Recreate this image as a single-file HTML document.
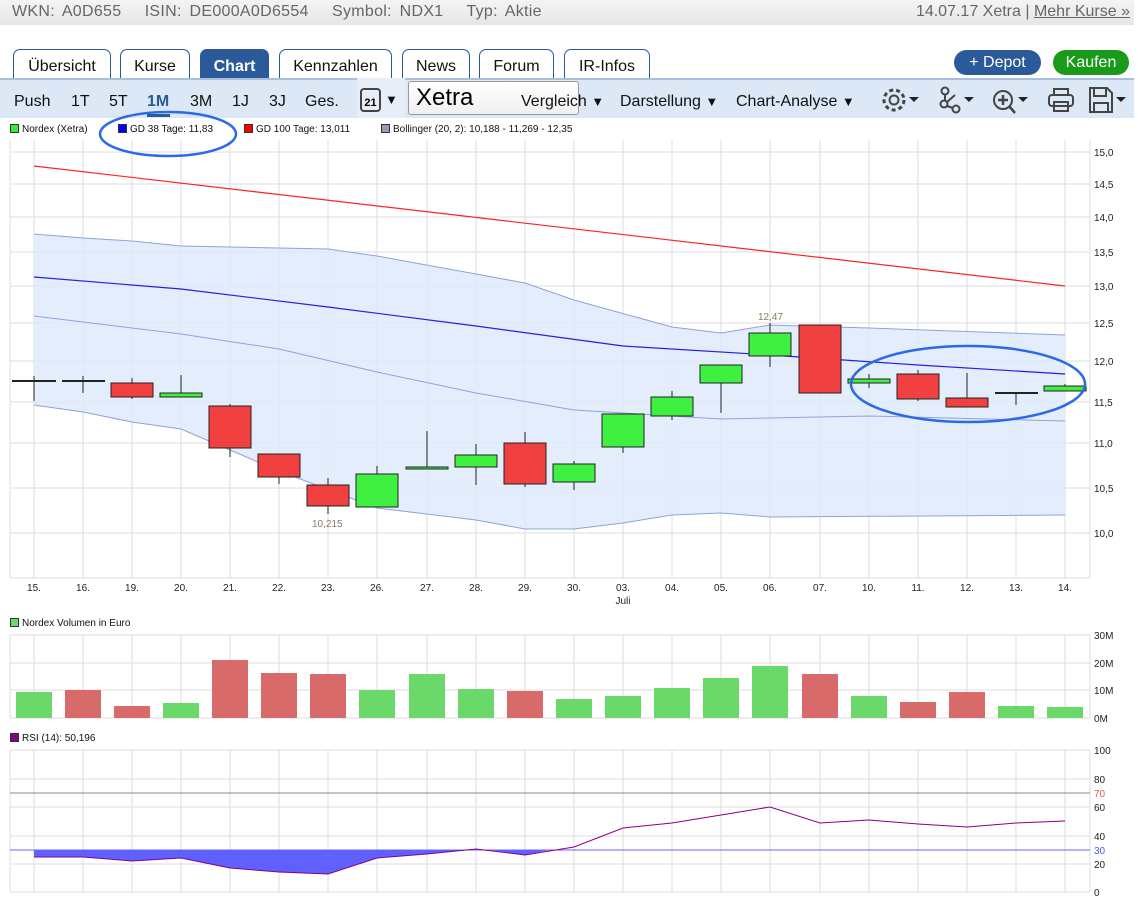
<!DOCTYPE html>
<html><head><meta charset="utf-8"><style>
body{margin:0;width:1138px;height:909px;background:#fff;font-family:"Liberation Sans",sans-serif;overflow:hidden;position:relative}
.top{position:absolute;left:0;top:0;width:1134px;height:25px;background:linear-gradient(#f4f4f4,#e6e6e6);color:#666;font-size:16px;line-height:24px}
.top .l{position:absolute;left:12px;word-spacing:3px;letter-spacing:0.3px}.top .r{position:absolute;right:4px}
.tab{position:absolute;top:49px;height:28px;border:1px solid #2a5a9a;border-bottom:none;border-radius:7px 7px 0 0;background:#fff;font-size:16px;line-height:33px;text-align:center;color:#111}
.tab.a{background:#2a5a9a;color:#fff;font-weight:bold}
.btn{position:absolute;top:50px;height:25px;border-radius:13px;color:#fff;font-size:16px;line-height:25px;text-align:center}
.tb{position:absolute;left:0;top:78px;width:1134px;height:40px;background:#dde8f6;border-top:2px solid #a8bfe0;box-sizing:border-box}
.t{position:absolute;top:93px;font-size:16px;color:#111}
.lg{position:absolute;top:124px;font-size:10px;color:#111}
.lg i{display:inline-block;width:7px;height:7px;border:1px solid #333;margin-right:3px;vertical-align:-1px}
</style></head><body>
<div class="top"><span class="l">WKN: A0D655&nbsp;&nbsp; ISIN: DE000A0D6554&nbsp;&nbsp; Symbol: NDX1&nbsp;&nbsp; Typ: Aktie</span><span class="r">14.07.17 Xetra | <u>Mehr Kurse »</u></span></div>
<div class="tab" style="left:13px;width:96px">Übersicht</div>
<div class="tab" style="left:120px;width:68px">Kurse</div>
<div class="tab a" style="left:200px;width:67px">Chart</div>
<div class="tab" style="left:279px;width:111px">Kennzahlen</div>
<div class="tab" style="left:402px;width:66px">News</div>
<div class="tab" style="left:479px;width:73px">Forum</div>
<div class="tab" style="left:564px;width:84px">IR-Infos</div>
<div class="btn" style="left:954px;width:87px;background:#2a5a9a">+ Depot</div>
<div class="btn" style="left:1053px;width:76px;background:#1a9a1a">Kaufen</div>
<div class="tb"></div>
<div class="t" style="left:14px">Push</div><div class="t" style="left:71px">1T</div><div class="t" style="left:109px">5T</div>
<div class="t" style="left:147px;color:#2a5a9a;font-weight:bold">1M</div><div style="position:absolute;left:147px;top:114px;width:23px;height:3px;background:#2a5a9a"></div>
<div class="t" style="left:190px">3M</div><div class="t" style="left:232px">1J</div><div class="t" style="left:269px">3J</div><div class="t" style="left:305px">Ges.</div>
<div style="position:absolute;left:357px;top:78px;width:48px;height:40px;background:#e8eef8"></div>
<div style="position:absolute;left:360px;top:88px;width:21px;height:24px;border:2px solid #444;border-radius:4px;font-size:11px;font-weight:bold;text-align:center;line-height:26px;box-sizing:border-box">21</div>
<div class="t" style="left:385px;font-size:13px;top:92px">▼</div>
<div style="position:absolute;left:408px;top:81px;width:171px;height:34px;background:linear-gradient(#fff,#f0f0f0);border:1px solid #999;border-radius:3px;font-size:24px;line-height:32px;padding-left:7px;box-sizing:border-box">Xetra</div>
<div class="t" style="left:521px">Vergleich <span style="font-size:13px">▼</span></div>
<div class="t" style="left:620px">Darstellung <span style="font-size:13px">▼</span></div>
<div class="t" style="left:736px">Chart-Analyse <span style="font-size:13px">▼</span></div>
<svg style="position:absolute;left:880px;top:86px" width="258" height="30" fill="none" stroke="#444" stroke-width="2">
<circle cx="14" cy="14" r="4.5"/><circle cx="14" cy="14" r="10" stroke-dasharray="4 3" stroke-width="3"/>
<path d="M29 11l5 5 5-5z" fill="#222" stroke="none"/>
<circle cx="65" cy="5" r="3.5"/><circle cx="64" cy="18" r="3.5"/><circle cx="76" cy="23" r="3.5"/><path d="M65 9v6M67 20l6 2M67 16l8-7"/>
<path d="M84 11l5 5 5-5z" fill="#222" stroke="none"/>
<circle cx="123" cy="14" r="9"/><path d="M129 20l6 7M118 14h10M123 9v10" stroke-width="2.5"/>
<path d="M138 11l5 5 5-5z" fill="#222" stroke="none"/>
<rect x="169" y="9" width="24" height="11" rx="3"/><rect x="174" y="3" width="14" height="6"/><rect x="174" y="16" width="14" height="9"/>
<path d="M210 2h17l5 5v19h-22z M214 2v8h12V2 M214 26v-9h14v9"/>
<path d="M236 11l5 5 5-5z" fill="#222" stroke="none"/>
</svg>
<div class="lg" style="left:10px"><i style="background:#3e3"></i>Nordex (Xetra)</div>
<div class="lg" style="left:118px"><i style="background:#00f"></i>GD 38 Tage: 11,83</div>
<div class="lg" style="left:244px"><i style="background:#f00"></i>GD 100 Tage: 13,011</div>
<div class="lg" style="left:381px"><i style="background:#99b"></i>Bollinger (20, 2): 10,188 - 11,269 - 12,35</div>
<div class="lg" style="left:10px;top:618px"><i style="background:#6d6"></i>Nordex Volumen in Euro</div>
<div class="lg" style="left:10px;top:733px"><i style="background:#808"></i>RSI (14): 50,196</div>
<svg style="position:absolute;left:0;top:0" width="1138" height="909" font-family="Liberation Sans" font-size="11" fill="#222">
<g stroke="#ddd" stroke-width="1">
<path d="M34 140V578M83 140V578M132 140V578M181 140V578M230 140V578M279 140V578M328 140V578M377 140V578M427 140V578M476 140V578M525 140V578M574 140V578M623 140V578M672 140V578M721 140V578M770 140V578M820 140V578M869 140V578M918 140V578M967 140V578M1016 140V578M1065 140V578"/>
<path d="M10 152H1090M10 184H1090M10 217H1090M10 252H1090M10 286H1090M10 323H1090M10 361H1090M10 402H1090M10 443H1090M10 488H1090M10 533H1090"/>
<path d="M10 140V578M1090 140V578M10 578H1090"/>
<path d="M34 635V718M83 635V718M132 635V718M181 635V718M230 635V718M279 635V718M328 635V718M377 635V718M427 635V718M476 635V718M525 635V718M574 635V718M623 635V718M672 635V718M721 635V718M770 635V718M820 635V718M869 635V718M918 635V718M967 635V718M1016 635V718M1065 635V718"/>
<path d="M10 635H1090M10 663H1090M10 690H1090M10 718H1090M10 635V718M1090 635V718"/>
<path d="M34 750V892M83 750V892M132 750V892M181 750V892M230 750V892M279 750V892M328 750V892M377 750V892M427 750V892M476 750V892M525 750V892M574 750V892M623 750V892M672 750V892M721 750V892M770 750V892M820 750V892M869 750V892M918 750V892M967 750V892M1016 750V892M1065 750V892"/>
<path d="M10 750H1090M10 779H1090M10 807H1090M10 836H1090M10 864H1090M10 892H1090M10 750V892M1090 750V892"/>
</g>
<polygon fill="#dde8fa" fill-opacity="0.8" stroke="none" points="34,234 83,238 132,241 181,246 328,249 377,256 476,274 525,283 574,300 672,327 721,333 770,325 869,328 1065,335 1065,515 770,517 721,513 672,515 623,523 574,529 525,529 476,520 377,508 279,471 181,429 132,422 83,412 34,405"/>
<g fill="none" stroke="#8fa3d8" stroke-width="1">
<polyline points="34,234 83,238 132,241 181,246 328,249 377,256 476,274 525,283 574,300 672,327 721,333 770,325 869,328 1065,335"/>
<polyline points="34,316 83,322 132,328 181,334 279,349 377,372 476,393 574,410 721,419 869,416 1065,421"/>
<polyline points="34,405 83,412 132,422 181,429 279,471 377,508 476,520 525,529 574,529 623,523 672,515 721,513 770,517 1065,515"/>
</g>
<line x1="34" y1="166" x2="1065" y2="286" stroke="#f22" stroke-width="1.2"/>
<polyline fill="none" stroke="#22d" stroke-width="1.2" points="34,277 181,289 328,307 476,326 623,346 770,355 918,365 1065,374"/>
<g stroke="#222" stroke-width="1">
<path d="M34 376V401M83 376V393M132 378V399M181 375V397M230 404V457M279 454V484M328 478V514M377 466V507M427 431V469M476 444V485M525 432V487M574 461V490M623 414V453M672 391V420M721 365V413M770 323V367M820 325V393M869 374V388M918 370V401M967 373V407M1016 392V405M1065 384V391"/>
<path d="M12 381H56M62 381H105M995 393H1038" stroke-width="2"/>
</g>
<g stroke="#222" stroke-width="1">
<g fill="#f04040"><rect x="111" y="383" width="42" height="14"/><rect x="209" y="406" width="42" height="42"/><rect x="258" y="454" width="42" height="23"/><rect x="307" y="485" width="42" height="21"/><rect x="504" y="443" width="42" height="41"/><rect x="799" y="325" width="42" height="68"/><rect x="897" y="374" width="42" height="25"/><rect x="946" y="398" width="42" height="9"/></g>
<g fill="#40f040"><rect x="160" y="393" width="42" height="4"/><rect x="356" y="474" width="42" height="33"/><rect x="406" y="467" width="42" height="2"/><rect x="455" y="455" width="42" height="12"/><rect x="553" y="464" width="42" height="18"/><rect x="602" y="414" width="42" height="33"/><rect x="651" y="397" width="42" height="19"/><rect x="700" y="365" width="42" height="18"/><rect x="749" y="333" width="42" height="23"/><rect x="848" y="379" width="42" height="4"/><rect x="1044" y="386" width="42" height="5"/></g>
</g>
<text x="312" y="527" fill="#8a7a60" font-size="10">10,215</text>
<text x="758" y="320" fill="#8a7a60" font-size="10">12,47</text>
<g font-size="10"><text x="1094" y="156">15,0</text><text x="1094" y="188">14,5</text><text x="1094" y="221">14,0</text><text x="1094" y="256">13,5</text><text x="1094" y="290">13,0</text><text x="1094" y="327">12,5</text><text x="1094" y="365">12,0</text><text x="1094" y="406">11,5</text><text x="1094" y="447">11,0</text><text x="1094" y="492">10,5</text><text x="1094" y="537">10,0</text>
<g text-anchor="middle"><text x="34" y="591">15.</text><text x="83" y="591">16.</text><text x="132" y="591">19.</text><text x="181" y="591">20.</text><text x="230" y="591">21.</text><text x="279" y="591">22.</text><text x="328" y="591">23.</text><text x="377" y="591">26.</text><text x="427" y="591">27.</text><text x="476" y="591">28.</text><text x="525" y="591">29.</text><text x="574" y="591">30.</text><text x="623" y="591">03.</text><text x="623" y="604">Juli</text><text x="672" y="591">04.</text><text x="721" y="591">05.</text><text x="770" y="591">06.</text><text x="820" y="591">07.</text><text x="869" y="591">10.</text><text x="918" y="591">11.</text><text x="967" y="591">12.</text><text x="1016" y="591">13.</text><text x="1065" y="591">14.</text></g>
<text x="1094" y="639">30M</text><text x="1094" y="667">20M</text><text x="1094" y="694">10M</text><text x="1094" y="722">0M</text>
<text x="1094" y="754">100</text><text x="1094" y="783">80</text><text x="1094" y="797" fill="#e55">70</text><text x="1094" y="811">60</text><text x="1094" y="840">40</text><text x="1094" y="854" fill="#55e">30</text><text x="1094" y="868">20</text><text x="1094" y="896">0</text></g>
<g fill="#6ad96a"><rect x="16" y="692" width="36" height="26"/><rect x="163" y="703" width="36" height="15"/><rect x="359" y="690" width="36" height="28"/><rect x="409" y="674" width="36" height="44"/><rect x="458" y="689" width="36" height="29"/><rect x="556" y="699" width="36" height="19"/><rect x="605" y="696" width="36" height="22"/><rect x="654" y="688" width="36" height="30"/><rect x="703" y="678" width="36" height="40"/><rect x="752" y="666" width="36" height="52"/><rect x="851" y="696" width="36" height="22"/><rect x="998" y="706" width="36" height="12"/><rect x="1047" y="707" width="36" height="11"/></g>
<g fill="#d96a6a"><rect x="65" y="690" width="36" height="28"/><rect x="114" y="706" width="36" height="12"/><rect x="212" y="660" width="36" height="58"/><rect x="261" y="673" width="36" height="45"/><rect x="310" y="674" width="36" height="44"/><rect x="507" y="691" width="36" height="27"/><rect x="802" y="674" width="36" height="44"/><rect x="900" y="702" width="36" height="16"/><rect x="949" y="692" width="36" height="26"/></g>
<line x1="10" y1="793" x2="1090" y2="793" stroke="#888"/>
<line x1="10" y1="850" x2="1090" y2="850" stroke="#66f"/>
<polygon fill="#6060ff" points="34,850 34,857 83,857 132,861 181,858 230,868 279,872 328,874 377,858 427,854 465,850 490,850 525,855 550,850"/>
<polyline fill="none" stroke="#808" stroke-width="1" points="34,857 83,857 132,861 181,858 230,868 279,872 328,874 377,858 427,854 476,849 525,855 574,847 623,828 672,823 721,815 770,807 820,823 869,820 918,824 967,827 1016,823 1065,821"/>
<g fill="none" stroke="#2a6ae8" stroke-width="2.5"><ellipse cx="168" cy="134" rx="68" ry="22"/><ellipse cx="968" cy="384" rx="117" ry="38"/></g>
</svg>
</body></html>
